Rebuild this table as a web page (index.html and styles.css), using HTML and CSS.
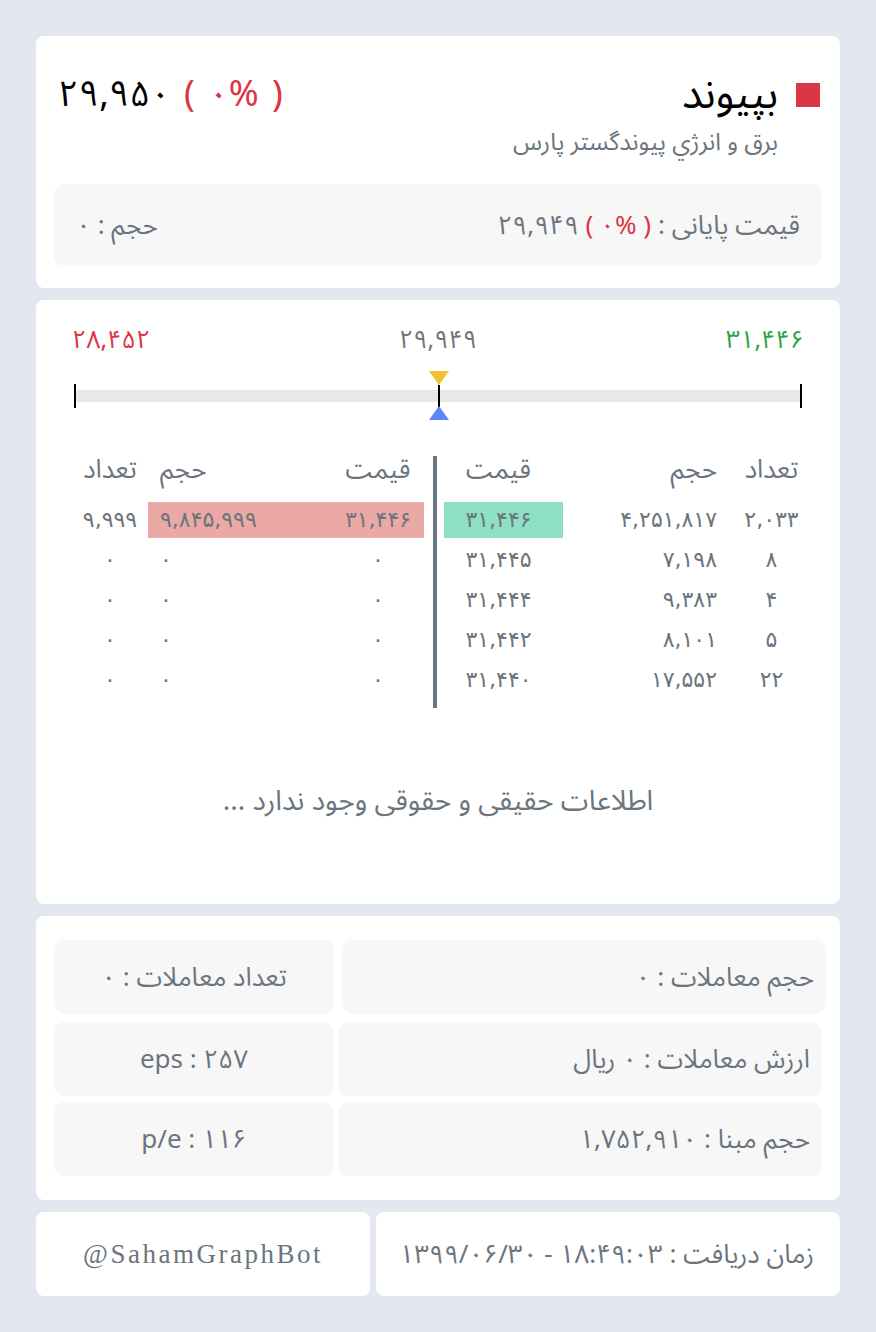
FILE: index.html
```html
<!DOCTYPE html>
<html lang="fa" dir="rtl">
<head>
<meta charset="utf-8">
<link rel="stylesheet" href="styles.css">
</head>
<body>
<div class="page">
  <section class="card card-head">
    <div class="head-row">
      <div class="title-block">
        <div class="title-line"><span class="square"></span><span class="title">بپیوند</span></div>
        <div class="subtitle">برق و انرژي پيوندگستر پارس</div>
      </div>
      <div class="last-price" dir="ltr">۲۹,۹۵۰ <span class="red">( ۰% )</span></div>
    </div>
    <div class="gray-box close-box">
      <span>قیمت پایانی : <bdi dir="ltr">۲۹,۹۴۹ <span class="red">( ۰% )</span></bdi></span>
      <span>حجم : ۰</span>
    </div>
  </section>

  <section class="card card-book">
    <div class="range-labels">
      <span class="green">۳۱,۴۴۶</span>
      <span class="gray">۲۹,۹۴۹</span>
      <span class="red">۲۸,۴۵۲</span>
    </div>
    <div class="range-bar">
      <div class="track"></div>
      <span class="tick tick-left"></span>
      <span class="tick tick-right"></span>
      <div class="marker" style="left: 50%;">
        <span class="tri-down"></span>
        <span class="marker-line"></span>
        <span class="tri-up"></span>
      </div>
    </div>
    <div class="book">
      <div class="divider"></div>
      <div class="c hdr l-cnt">تعداد</div>
      <div class="c hdr l-vol">حجم</div>
      <div class="c hdr l-prc">قیمت</div>
      <div class="c hdr r-prc">قیمت</div>
      <div class="c hdr r-vol">حجم</div>
      <div class="c hdr r-cnt">تعداد</div>

      <div class="c l-cnt">۹,۹۹۹</div>
      <div class="c l-vol hl-red">۹,۸۴۵,۹۹۹</div>
      <div class="c l-prc hl-red">۳۱,۴۴۶</div>
      <div class="c r-prc hl-green">۳۱,۴۴۶</div>
      <div class="c r-vol">۴,۲۵۱,۸۱۷</div>
      <div class="c r-cnt">۲,۰۳۳</div>

      <div class="c l-cnt">۰</div>
      <div class="c l-vol">۰</div>
      <div class="c l-prc">۰</div>
      <div class="c r-prc">۳۱,۴۴۵</div>
      <div class="c r-vol">۷,۱۹۸</div>
      <div class="c r-cnt">۸</div>

      <div class="c l-cnt">۰</div>
      <div class="c l-vol">۰</div>
      <div class="c l-prc">۰</div>
      <div class="c r-prc">۳۱,۴۴۴</div>
      <div class="c r-vol">۹,۳۸۳</div>
      <div class="c r-cnt">۴</div>

      <div class="c l-cnt">۰</div>
      <div class="c l-vol">۰</div>
      <div class="c l-prc">۰</div>
      <div class="c r-prc">۳۱,۴۴۲</div>
      <div class="c r-vol">۸,۱۰۱</div>
      <div class="c r-cnt">۵</div>

      <div class="c l-cnt">۰</div>
      <div class="c l-vol">۰</div>
      <div class="c l-prc">۰</div>
      <div class="c r-prc">۳۱,۴۴۰</div>
      <div class="c r-vol">۱۷,۵۵۲</div>
      <div class="c r-cnt">۲۲</div>
    </div>
    <div class="no-data">اطلاعات حقیقی و حقوقی وجود ندارد ...</div>
  </section>

  <section class="card card-stats">
    <div class="stat-row first">
      <div class="gray-box stat-wide"><span>حجم معاملات : ۰</span></div>
      <div class="gray-box stat-narrow"><span>تعداد معاملات : ۰</span></div>
    </div>
    <div class="stat-row">
      <div class="gray-box stat-wide"><span>ارزش معاملات : ۰ ریال</span></div>
      <div class="gray-box stat-narrow"><span dir="ltr">eps : ۲۵۷</span></div>
    </div>
    <div class="stat-row">
      <div class="gray-box stat-wide"><span>حجم مبنا : ۱,۷۵۲,۹۱۰</span></div>
      <div class="gray-box stat-narrow"><span dir="ltr">p/e : ۱۱۶</span></div>
    </div>
  </section>

  <div class="footer">
    <div class="card foot-time"><span>زمان دریافت : <bdi dir="ltr">۱۳۹۹/۰۶/۳۰ - ۱۸:۴۹:۰۳</bdi></span></div>
    <div class="card foot-bot" dir="ltr"><span>@SahamGraphBot</span></div>
  </div>
</div>
</body>
</html>
```
FILE: styles.css
```css
* { box-sizing: border-box; }
html, body { margin: 0; padding: 0; }
body {
  background: #e3e7ef;
  font-family: "Noto Sans Arabic", "DejaVu Sans", sans-serif;
  color: #6c757d;
}
.page {
  padding: 36px;
  display: flex;
  flex-direction: column;
  gap: 12px;
}
.card {
  background: #fff;
  border-radius: 8px;
}
.red { color: #dc3545; }
.green { color: #28a745; }
.gray { color: #6c757d; }

/* header card */
.card-head { padding: 31px 18px 22px 18px; }
.head-row {
  display: flex;
  justify-content: space-between;
  align-items: flex-start;
}
.title-block { display: flex; flex-direction: column; align-items: flex-start; }
.title-line { display: flex; align-items: center; height: 56px; padding-right: 2px; }
.square { width: 24px; height: 24px; background: #dc3545; margin-left: 18px; }
.title { font-size: 42px; color: #000; line-height: 56px; }
.subtitle { font-size: 24px; line-height: 32px; margin-top: 4px; padding-right: 44px; }
.last-price {
  font-size: 36px;
  color: #000;
  line-height: 56px;
  padding-left: 4px;
  word-spacing: 4px;
}
.gray-box { background: #f7f7f8; border-radius: 10px; }
.close-box {
  margin-top: 25px;
  height: 82px;
  display: flex;
  align-items: center;
  justify-content: space-between;
  padding: 0 22px;
  font-size: 26px;
}

/* order book card */
.card-book { padding: 24px 36px 86px 36px; }
.range-labels {
  display: flex;
  justify-content: space-between;
  font-size: 25px;
  line-height: 32px;
}
.range-bar {
  position: relative;
  height: 49px;
  margin: 15px 2px 0 2px;
}
.track {
  position: absolute;
  left: 0; right: 0; top: 19px;
  height: 12px;
  background: #ebe7e6;
}
.tick {
  position: absolute;
  top: 13px;
  width: 2px;
  height: 24px;
  background: #000;
}
.tick-left { left: 0; }
.tick-right { right: 0; }
.marker {
  position: absolute;
  top: 0;
  width: 20px;
  height: 49px;
  margin-left: -9px;
  display: flex;
  flex-direction: column;
  align-items: center;
}
.tri-down {
  width: 0; height: 0;
  border-left: 10px solid transparent;
  border-right: 10px solid transparent;
  border-top: 14px solid #f2c12e;
}
.marker-line { width: 2px; height: 22px; background: #000; }
.tri-up {
  width: 0; height: 0;
  border-left: 10px solid transparent;
  border-right: 10px solid transparent;
  border-bottom: 14px solid #5b86f9;
  margin-top: -1px;
}

.book {
  direction: ltr;
  margin-top: 36px;
  display: grid;
  grid-template-columns: 76px 184px 92px 9px 4px 7px 119px 166px 75px;
  grid-template-rows: 44px repeat(5, 40px) 8px;
}
.divider {
  grid-column: 5;
  grid-row: 1 / 8;
  background: #6c757d;
}
.c {
  direction: rtl;
  height: 36px;
  margin: 2px 0;
  line-height: 36px;
  white-space: nowrap;
  font-family: "DejaVu Sans", sans-serif;
  font-size: 22px;
}
.hdr {
  margin: 0;
  height: 28px;
  line-height: 28px;
  font-size: 26px;
  font-family: "Noto Sans Arabic", "DejaVu Sans", sans-serif;
}
.l-cnt { grid-column: 1; text-align: center; }
.l-vol { grid-column: 2; text-align: left; padding-left: 12px; }
.l-prc { grid-column: 3; text-align: center; }
.r-prc { grid-column: 7; text-align: center; padding-right: 10px; }
.r-vol { grid-column: 8; text-align: right; padding-right: 12px; }
.r-cnt { grid-column: 9; text-align: center; padding-left: 10px; }
.hl-red { background: #eba9a6; }
.hl-green { background: #8ee0c4; }
.no-data {
  margin-top: 78px;
  text-align: center;
  font-size: 28px;
  line-height: 32px;
}

/* stats */
.card-stats {
  padding: 24px 18px;
  display: flex;
  flex-direction: column;
  gap: 6px;
}
.stat-row { display: flex; gap: 4px; }
.stat-row.first { gap: 8px; margin-right: -4px; margin-bottom: 2px; }
.stat-row .gray-box {
  height: 74px;
  display: flex;
  align-items: center;
  font-size: 26px;
}
.stat-wide { flex: 1; padding-right: 12px; }
.stat-narrow { width: 280px; justify-content: center; }

/* footer */
.footer { display: flex; gap: 6px; }
.footer .card {
  height: 84px;
  display: flex;
  align-items: center;
}
.foot-time { flex: 1; padding-right: 26px; font-size: 26px; }
.foot-bot {
  width: 334px;
  justify-content: center;
  font-family: "Liberation Serif", serif;
  font-size: 27px;
  letter-spacing: 2.5px;
}
```
